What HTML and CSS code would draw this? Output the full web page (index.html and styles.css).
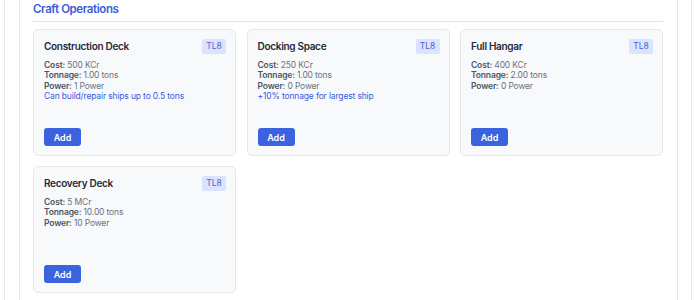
FILE: index.html
```html
<!DOCTYPE html>
<html lang="en">
<head>
    <meta charset="UTF-8">
    <title>Craft Operations</title>
    <link rel="stylesheet" href="styles.css">
</head>
<body>
<div class="page">
    <div class="panel">
        <h2 class="section-title">Craft Operations</h2>
        <div class="card-grid">
            <div class="card">
                <div class="card-head">
                    <h3>Construction Deck</h3>
                    <span class="badge">TL8</span>
                </div>
                <div class="card-body">
                    <p><b>Cost:</b> 500 KCr</p>
                    <p><b>Tonnage:</b> 1.00 tons</p>
                    <p><b>Power:</b> 1 Power</p>
                    <p class="note">Can build/repair ships up to 0.5 tons</p>
                </div>
                <button class="add-btn">Add</button>
            </div>
            <div class="card">
                <div class="card-head">
                    <h3>Docking Space</h3>
                    <span class="badge">TL8</span>
                </div>
                <div class="card-body">
                    <p><b>Cost:</b> 250 KCr</p>
                    <p><b>Tonnage:</b> 1.00 tons</p>
                    <p><b>Power:</b> 0 Power</p>
                    <p class="note">+10% tonnage for largest ship</p>
                </div>
                <button class="add-btn">Add</button>
            </div>
            <div class="card">
                <div class="card-head">
                    <h3>Full Hangar</h3>
                    <span class="badge">TL8</span>
                </div>
                <div class="card-body">
                    <p><b>Cost:</b> 400 KCr</p>
                    <p><b>Tonnage:</b> 2.00 tons</p>
                    <p><b>Power:</b> 0 Power</p>
                </div>
                <button class="add-btn">Add</button>
            </div>
            <div class="card">
                <div class="card-head">
                    <h3>Recovery Deck</h3>
                    <span class="badge">TL8</span>
                </div>
                <div class="card-body">
                    <p><b>Cost:</b> 5 MCr</p>
                    <p><b>Tonnage:</b> 10.00 tons</p>
                    <p><b>Power:</b> 10 Power</p>
                </div>
                <button class="add-btn">Add</button>
            </div>
        </div>
    </div>
</div>
</body>
</html>
```

FILE: styles.css
```css
/* Reset */
* {
    box-sizing: border-box;
    margin: 0;
    padding: 0;
}

body {
    font-family: Inter, 'Noto Sans', sans-serif;
    background-color: #fff;
    color: #1f2937;
}

/* Outer frame */
.page {
    margin: 0 4px;
    padding: 0 13px 0 14px;
    border-left: 1px solid #e5e7eb;
    border-right: 1px solid #e5e7eb;
    min-height: 300px;
}

.panel {
    padding: 1px 14px 20px 13px;
    border-left: 1px solid #e5e7eb;
    border-right: 1px solid #e5e7eb;
    min-height: 300px;
}

/* Section header */
.section-title {
    font-size: 11.5px;
    font-weight: 600;
    letter-spacing: -0.4px;
    color: #3b5bdb;
    line-height: 16px;
    padding-bottom: 4px;
    border-bottom: 1px solid #dbe4ff;
    margin-bottom: 7px;
}

/* Cards */
.card-grid {
    display: grid;
    grid-template-columns: repeat(3, 1fr);
    gap: 10px 10.5px;
}

.card {
    display: flex;
    flex-direction: column;
    min-height: 127px;
    padding: 8px 9px 9px 10px;
    background-color: #f8f9fb;
    border: 1px solid #e5e7eb;
    border-radius: 5px;
}

.card-head {
    display: flex;
    justify-content: space-between;
    align-items: center;
    height: 16px;
    margin-bottom: 6px;
}

.card-head h3 {
    font-size: 10px;
    font-weight: 600;
    letter-spacing: -0.3px;
    color: #1f2937;
}

.badge {
    display: inline-block;
    width: 24px;
    height: 15px;
    line-height: 15px;
    text-align: center;
    font-size: 8.5px;
    color: #4c63c9;
    background-color: #dbe4fe;
    border-radius: 2px;
}

.card-body p {
    font-size: 8.5px;
    line-height: 10.4px;
    letter-spacing: -0.15px;
    color: #6b7280;
}

.card-body b {
    font-weight: 600;
    color: #4b5563;
}

.card-body .note {
    color: #3b5bdb;
}

.add-btn {
    margin-top: auto;
    align-self: flex-start;
    width: 37px;
    height: 18px;
    border: none;
    border-radius: 3px;
    background-color: #3b63e0;
    color: #fff;
    font-family: inherit;
    font-size: 9px;
    font-weight: 600;
    cursor: pointer;
}
```
